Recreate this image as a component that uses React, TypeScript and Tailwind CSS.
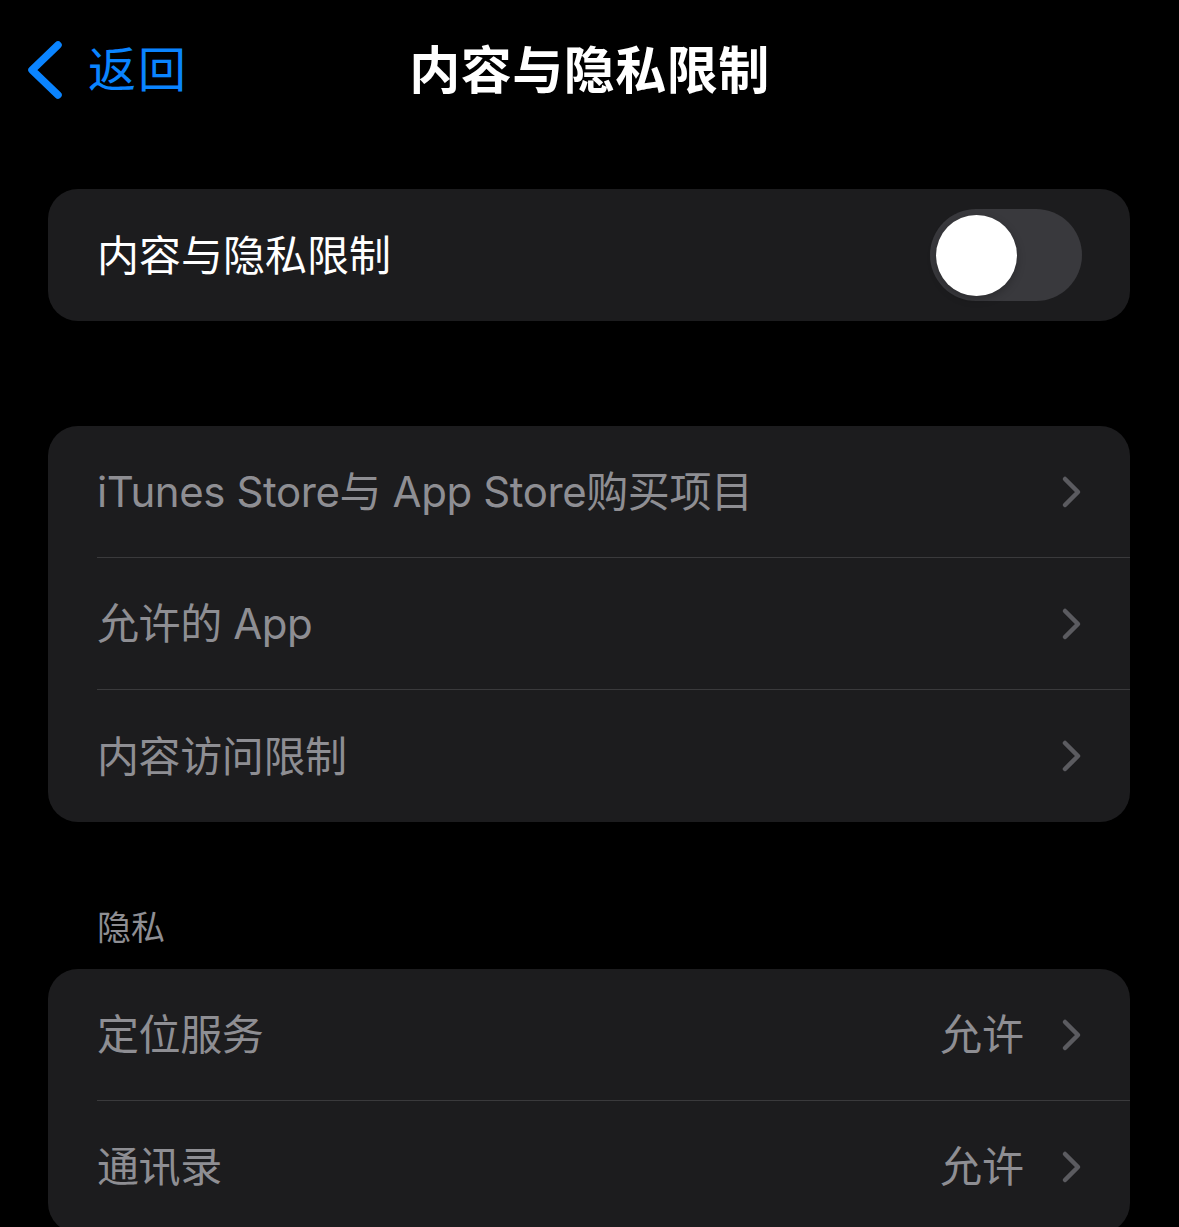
import { ReactNode } from "react";

const font = { fontFamily: 'Inter, "Noto Sans CJK SC", sans-serif' };

function Chevron() {
  return (
    <svg width="22" height="34" viewBox="0 0 22 34" fill="none">
      <path d="M5 4 L18 17 L5 30" stroke="#5b5b60" strokeWidth="4.5" strokeLinecap="round" strokeLinejoin="round" />
    </svg>
  );
}

function Toggle() {
  return (
    <div className="w-[152px] h-[92px] rounded-full bg-[#39393d] p-[6px] flex items-center">
      <div className="w-[81px] h-[81px] rounded-full bg-white shadow-[0_3px_8px_rgba(0,0,0,0.25)]" />
    </div>
  );
}

function Row({ label, value, last }: { label: string; value?: string; last?: boolean }) {
  return (
    <div className="h-[132px] pl-[49px] flex">
      <div className={"flex-1 flex items-center pr-[48px] " + (last ? "" : "border-b border-[#3a3a3c]")}>
        <span className="flex-1 text-[42px] text-[#8e8e93] tracking-[-0.4px]">{label}</span>
        {value && <span className="text-[42px] text-[#8e8e93] mr-[36px]">{value}</span>}
        <Chevron />
      </div>
    </div>
  );
}

function Card({ children }: { children: ReactNode }) {
  return <div className="mx-[48px] w-[1082px] rounded-[30px] bg-[#1c1c1e] overflow-hidden">{children}</div>;
}

export default function App() {
  return (
    <div className="w-[1179px] h-[1227px] bg-black overflow-hidden text-white" style={font}>
      <header className="h-[140px] grid grid-cols-[1fr_auto_1fr] items-center">
        <div className="flex items-center pl-[26px] text-[#0a84ff]">
          <svg width="38" height="60" viewBox="0 0 38 60" fill="none">
            <path d="M32 5 L6 30 L32 55" stroke="#0a84ff" strokeWidth="7.5" strokeLinecap="round" strokeLinejoin="round" />
          </svg>
          <span className="ml-[24px] text-[48px] leading-none tracking-[2px]">返回</span>
        </div>
        <h1 className="text-[51px] font-bold leading-none tracking-[0.5px]">内容与隐私限制</h1>
        <div />
      </header>

      <div className="mt-[49px]">
        <Card>
          <div className="h-[132px] pl-[49px] pr-[48px] flex items-center">
            <span className="flex-1 text-[42px] text-white">内容与隐私限制</span>
            <Toggle />
          </div>
        </Card>
      </div>

      <div className="mt-[105px]">
        <Card>
          <Row label="iTunes Store与 App Store购买项目" />
          <Row label="允许的 App" />
          <Row label="内容访问限制" last />
        </Card>
      </div>

      <div className="mt-[86px] pl-[97px] text-[34px] leading-[40px] text-[#8e8e93]">隐私</div>

      <div className="mt-[21px]">
        <Card>
          <Row label="定位服务" value="允许" />
          <Row label="通讯录" value="允许" />
        </Card>
      </div>
    </div>
  );
}
